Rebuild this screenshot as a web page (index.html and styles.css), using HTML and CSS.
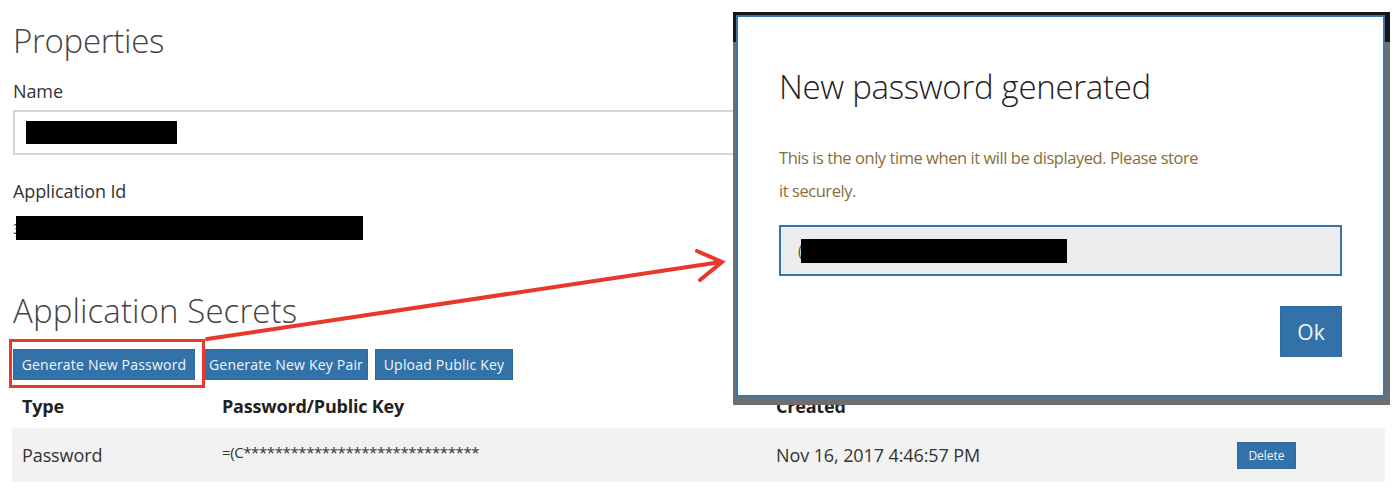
FILE: index.html
```html
<!DOCTYPE html>
<html>
<head>
<meta charset="utf-8">
<link rel="stylesheet" href="styles.css">
</head>
<body>
<div class="page">
  <h1 class="heading">Properties</h1>
  <div class="label">Name</div>
  <div class="text-input"><span class="redact redact-name"></span></div>
  <div class="label label-id">Application Id</div>
  <div class="id-row"><span class="peek">3</span><span class="redact redact-id"></span></div>

  <h1 class="heading heading-secrets">Application Secrets</h1>
  <div class="actions">
    <button class="btn btn-first">Generate New Password</button>
    <button class="btn btn-second">Generate New Key Pair</button>
    <button class="btn btn-third">Upload Public Key</button>
    <div class="highlight"></div>
  </div>

  <div class="table">
    <div class="trow thead">
      <div class="c-type">Type</div>
      <div class="c-key">Password/Public Key</div>
      <div class="c-created">Created</div>
      <div class="c-act"></div>
    </div>
    <div class="trow tbody">
      <div class="c-type">Password</div>
      <div class="c-key">=(C******************************</div>
      <div class="c-created">Nov 16, 2017 4:46:57 PM</div>
      <div class="c-act"><button class="btn btn-small">Delete</button></div>
    </div>
  </div>
</div>

<svg class="arrow" width="1398" height="490" viewBox="0 0 1398 490">
  <line x1="207" y1="339" x2="721" y2="262" stroke="#e8372b" stroke-width="4" stroke-linecap="round"/>
  <polyline points="697,251 722,262 700,280" fill="none" stroke="#e8372b" stroke-width="4" stroke-linecap="round" stroke-linejoin="miter"/>
</svg>

<div class="modal-frame">
  <div class="modal">
    <h2 class="modal-title">New password generated</h2>
    <p class="modal-text">This is the only time when it will be displayed. Please store it securely.</p>
    <div class="modal-input"><span class="peek-c">(</span><span class="redact redact-pw"></span></div>
    <div class="modal-footer"><button class="btn btn-ok">Ok</button></div>
  </div>
</div>
</body>
</html>
```

FILE: styles.css
```css
html, body {
  margin: 0;
  padding: 0;
  background: #ffffff;
}
body {
  width: 1398px;
  height: 490px;
  overflow: hidden;
  position: relative;
  font-family: "Open Sans", "Noto Sans", sans-serif;
  color: #333333;
}
.page {
  padding: 18px 13px 0 13px;
  display: flex;
  flex-direction: column;
}
.heading {
  margin: 0;
  font-weight: 300;
  font-size: 33px;
  line-height: 46px;
  color: #444444;
  letter-spacing: -0.3px;
}
.label {
  margin-top: 15px;
  font-size: 18px;
  line-height: 24px;
  letter-spacing: -0.1px;
}
.text-input {
  margin-top: 7px;
  width: 1368px;
  height: 45px;
  border: 2px solid #d6d6d6;
  display: flex;
  align-items: center;
  padding-left: 11px;
  box-sizing: border-box;
}
.redact {
  display: inline-block;
  background: #000000;
}
.redact-name { width: 151px; height: 23px; }
.label-id { margin-top: 24px; }
.id-row {
  margin-top: 11px;
  height: 28px;
  display: flex;
  align-items: center;
}
.peek { font-size: 15px; line-height: 20px; }
.redact-id { width: 347px; height: 24px; margin-left: -6px; }

.heading-secrets { margin-top: 46px; letter-spacing: 0.1px; }

.actions {
  position: relative;
  margin-top: 15px;
  display: flex;
  gap: 7px;
}
.btn {
  font-family: "Open Sans", "Noto Sans", sans-serif;
  background: #3372a8;
  color: #f2f6fa;
  border: 1px solid #2e6a9e;
  border-radius: 0;
  font-size: 14px;
  letter-spacing: 0.2px;
  height: 31px;
  padding: 0;
  margin: 0;
  white-space: nowrap;
}
.btn-first { width: 182px; margin-right: 2px; }
.btn-second { width: 164px; }
.btn-third { width: 138px; }
.highlight {
  position: absolute;
  left: -4px;
  top: -10px;
  width: 190px;
  height: 43px;
  border: 3px solid #e8372b;
}

.table {
  margin-top: 11px;
  width: 1373px;
  margin-left: -1px;
}
.trow {
  display: flex;
  align-items: center;
}
.thead {
  height: 30px;
  font-weight: 700;
  font-size: 18px;
  letter-spacing: -0.2px;
  color: #222222;
}
.tbody {
  margin-top: 7px;
  height: 54px;
  background: #f2f2f2;
  font-size: 18px;
  letter-spacing: -0.1px;
  color: #333333;
}
.c-type { width: 200px; padding-left: 10px; box-sizing: border-box; }
.c-key { width: 554px; padding-left: 10px; box-sizing: border-box; }
.c-created { width: 460px; padding-left: 10px; box-sizing: border-box; }
.c-act { flex: 1; padding-left: 11px; }
.tbody .c-key { font-size: 15px; letter-spacing: -0.4px; margin-top: -6px; }
.btn-small {
  height: 27px;
  width: 59px;
  font-size: 12px;
  letter-spacing: 0;
}

.arrow {
  position: absolute;
  left: 0;
  top: 0;
  pointer-events: none;
}

.modal-frame {
  position: absolute;
  left: 733px;
  top: 12px;
  width: 657px;
  height: 393px;
  box-sizing: border-box;
  padding: 3px 5px 8px 3px;
  background: linear-gradient(#151515 0, #151515 30px, #6e6e6e 30px);
}
.modal {
  background: #ffffff;
  border: 2px solid #3d74a8;
  height: 100%;
  box-sizing: border-box;
  padding: 0 41px 0 41px;
  display: flex;
  flex-direction: column;
}
.modal-title {
  margin: 50px 0 0 0;
  font-weight: 300;
  font-size: 33px;
  line-height: 40px;
  color: #222222;
  letter-spacing: -0.3px;
}
.modal-text {
  margin: 34px 0 0 0;
  max-width: 422px;
  font-size: 16.5px;
  line-height: 33px;
  color: #8a6d3b;
  letter-spacing: -0.45px;
}
.modal-input {
  margin-top: 18px;
  height: 51px;
  box-sizing: border-box;
  border: 2px solid #3a72a6;
  background: #ededed;
  display: flex;
  align-items: center;
  padding-left: 17px;
}
.peek-c { font-size: 16px; color: #555; }
.redact-pw { width: 266px; height: 24px; margin-left: -2px; }
.modal-footer {
  margin-top: 30px;
  display: flex;
  justify-content: flex-end;
}
.btn-ok {
  width: 62px;
  height: 51px;
  font-size: 21px;
  letter-spacing: 0;
}
```
